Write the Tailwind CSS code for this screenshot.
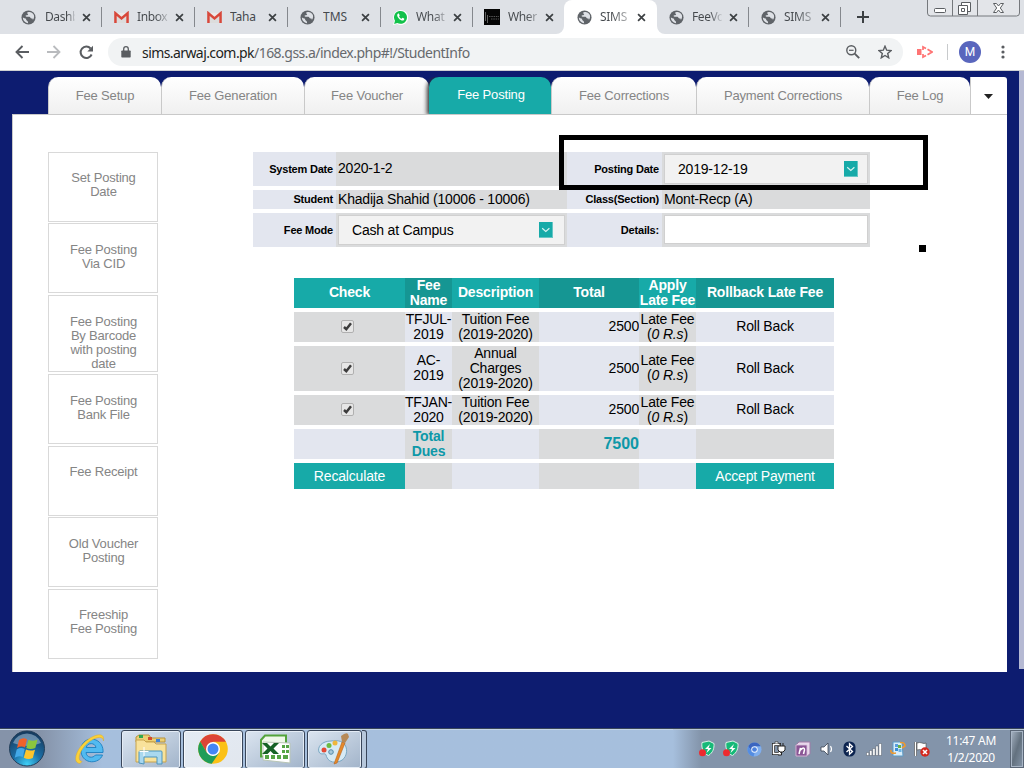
<!DOCTYPE html>
<html lang="en">
<head>
<meta charset="utf-8">
<title>SIMS</title>
<script src="https://cdn.jsdelivr.net/npm/@tailwindcss/browser@4"></script>
</head>
<body class="w-[1024px] h-[768px] overflow-hidden bg-[#0d1c70] flex flex-col relative font-['Liberation_Sans',sans-serif]">
<svg class="hidden">
  <symbol id="globe" viewBox="0 0 16 16"><circle cx="8" cy="8" r="7.500" fill="#5f6368"/><path d="M8.300 2.200c-2 .2-2.300 1.300-1 2 1 .5-.3 1.400-1.600 1.400-1.200 0-1 1.400.4 1.700h2.700c1.300.2 1.200 1.700 2.500 1.800 1.200 0 1.700.6 1.100 1.700 2.400-2.900 2-6.400-.8-8-1.100-.6-2.200-.7-3.300-.6zM2 8c0 3.300 2.400 5.700 5.600 6-.3-1 .1-2-.8-2.400-1-.4-1.500-1.100-1.400-2.200C4.200 9.200 3 8.700 2 8z" fill="#dee1e6"/></symbol>
  <symbol id="gmail" viewBox="0 0 16 14"><path d="M1 2h14v11H1z" fill="#eceaea"/><path d="M3 13V5l5 4 5-4v8z" fill="#dcdcdc"/><path d="M1.500 13V2.500L8 8l6.500-5.500V13" fill="none" stroke="#d8483b" stroke-width="2.700"/></symbol>
  <symbol id="close" viewBox="0 0 10 10"><path d="M1.200 1.200l7.600 7.600M8.800 1.200L1.200 8.800" stroke="#3c4043" stroke-width="1.900" fill="none"/></symbol>
  <symbol id="drop" viewBox="0 0 14 16"><path d="M0 0h14v16H0z" fill="#66c6c5"/><path d="M0 0h13v15H0z" fill="#17aaa8"/><path d="M3.200 6.300l3.600 3.200 3.600-3.200" stroke="#d9f2f1" stroke-width="1.200" fill="none"/></symbol>
  <symbol id="check" viewBox="0 0 13 13"><rect x=".5" y=".5" width="12" height="12" rx="1.500" fill="#e6e6e6" stroke="#b0b0b0"/><path d="M3 7l2.300 2.200 4.700-6" fill="none" stroke="#3c3c3c" stroke-width="2.500"/></symbol>
  <symbol id="shield" viewBox="0 0 18 18"><path d="M4 2.500L11 1l5 2.500c.3 5-1 9-5.500 12C6 14 3 9 4 2.500z" fill="#16b978" stroke="#d8f2e6"/><path d="M12 4L7 9h3l-1.500 4L13.500 8h-3z" fill="#fff"/><circle cx="4.500" cy="12.800" r="3.500" fill="#ee2a2f"/></symbol>
</svg>

<!-- browser tab strip -->
<div class="h-[34px] shrink-0 bg-[#dee1e6] flex pl-[10px] font-['Noto_Sans',sans-serif] text-[12px] text-[#45494d] leading-[34px]">
  <div class="w-[93px] flex items-center border-r border-transparent relative"><svg class="w-[15px] h-[15px] ml-[11px] shrink-0"><use href="#globe"/></svg><span class="ml-[9px] w-[30px] overflow-hidden whitespace-nowrap tracking-[-0.4px] bg-linear-to-r from-[#45494d] from-75% to-[#45494d]/10 bg-clip-text text-transparent">Dashb</span><svg class="w-[9px] h-[9px] ml-[7px] shrink-0"><use href="#close"/></svg><i class="absolute right-0 top-[7px] w-px h-5 bg-[#85888d]"></i></div>
  <div class="w-[93px] flex items-center border-r border-transparent relative"><svg class="w-[15px] h-[13px] ml-[11px] shrink-0"><use href="#gmail"/></svg><span class="ml-[8px] w-[31px] overflow-hidden whitespace-nowrap tracking-[-0.4px] bg-linear-to-r from-[#45494d] from-60% to-[#45494d]/20 bg-clip-text text-transparent">Inbox</span><svg class="w-[9px] h-[9px] ml-[7px] shrink-0"><use href="#close"/></svg><i class="absolute right-0 top-[7px] w-px h-5 bg-[#85888d]"></i></div>
  <div class="w-[93px] flex items-center border-r border-transparent relative"><svg class="w-[15px] h-[13px] ml-[11px] shrink-0"><use href="#gmail"/></svg><span class="ml-[8px] w-[31px] overflow-hidden whitespace-nowrap tracking-[-0.2px]">Taha</span><svg class="w-[9px] h-[9px] ml-[7px] shrink-0"><use href="#close"/></svg><i class="absolute right-0 top-[7px] w-px h-5 bg-[#85888d]"></i></div>
  <div class="w-[93px] flex items-center border-r border-transparent relative"><svg class="w-[15px] h-[15px] ml-[11px] shrink-0"><use href="#globe"/></svg><span class="ml-[8px] w-[31px] overflow-hidden whitespace-nowrap">TMS</span><svg class="w-[9px] h-[9px] ml-[7px] shrink-0"><use href="#close"/></svg><i class="absolute right-0 top-[7px] w-px h-5 bg-[#85888d]"></i></div>
  <div class="w-[92px] flex items-center border-r border-transparent relative"><svg class="w-[15px] h-[15px] ml-[11px] shrink-0" viewBox="0 0 16 16"><path d="M0 16l1.200-4.200A8 8 0 1 1 4.300 15z" fill="#fff"/><path d="M1.200 14.800l.9-3.300a6.900 6.900 0 1 1 2.500 2.400z" fill="#12c14a"/><path d="M5.200 4c-1.300 1-.9 3 1 5 2 2.100 4.300 3 5.400 1.700.8-.9.500-1.400-.2-1.800l-1-.5c-.6-.2-.9 1-1.500.8C7.500 8.700 6.700 7.700 6.500 7c0-.4.7-.7.6-1.200L6.500 4.300C6.200 3.700 5.700 3.700 5.200 4z" fill="#fff"/></svg><span class="ml-[8px] w-[30px] overflow-hidden whitespace-nowrap tracking-[-0.3px] bg-linear-to-r from-[#45494d] from-60% to-[#45494d]/20 bg-clip-text text-transparent">What</span><svg class="w-[9px] h-[9px] ml-[7px] shrink-0"><use href="#close"/></svg><i class="absolute right-0 top-[7px] w-px h-5 bg-[#85888d]"></i></div>
  <div class="w-[90px] flex items-center relative"><svg class="w-[16px] h-[16px] ml-[10px] shrink-0" viewBox="0 0 16 16"><path d="M0 0h16v16H0z" fill="#050505"/><path d="M1.500 3v9M3.500 6v8" stroke="#777" stroke-width=".8"/><path d="M5 7.500h10M7 10h8" stroke="#555" stroke-dasharray="1.500 .8"/></svg><span class="ml-[8px] w-[30px] overflow-hidden whitespace-nowrap tracking-[-0.4px] bg-linear-to-r from-[#45494d] from-60% to-[#45494d]/30 bg-clip-text text-transparent">Wher</span><svg class="w-[9px] h-[9px] ml-[7px] shrink-0"><use href="#close"/></svg></div>
  <div class="w-[93px] flex items-center bg-white rounded-t-[8px] relative"><svg class="absolute -left-2 bottom-0 w-2 h-2" viewBox="0 0 8 8"><path d="M8 0v8H0a8 8 0 0 0 8-8z" fill="#fff"/></svg><svg class="absolute -right-2 bottom-0 w-2 h-2" viewBox="0 0 8 8"><path d="M0 0v8h8a8 8 0 0 1-8-8z" fill="#fff"/></svg><svg class="w-[15px] h-[15px] ml-[13px] shrink-0"><use href="#globe"/></svg><span class="ml-[8px] w-[30px] overflow-hidden whitespace-nowrap tracking-[-0.3px] bg-linear-to-r from-[#45494d] from-40% to-[#45494d]/30 bg-clip-text text-transparent">SIMS</span><svg class="w-[9px] h-[9px] ml-[7px] shrink-0"><use href="#close"/></svg></div>
  <div class="w-[92px] flex items-center relative"><svg class="w-[15px] h-[15px] ml-[12px] shrink-0"><use href="#globe"/></svg><span class="ml-[8px] w-[30px] overflow-hidden whitespace-nowrap tracking-[-0.4px] bg-linear-to-r from-[#45494d] from-60% to-[#45494d]/10 bg-clip-text text-transparent">FeeVo</span><svg class="w-[9px] h-[9px] ml-[7px] shrink-0"><use href="#close"/></svg><i class="absolute right-0 top-[7px] w-px h-5 bg-[#85888d]"></i></div>
  <div class="w-[92px] flex items-center relative"><svg class="w-[15px] h-[15px] ml-[12px] shrink-0"><use href="#globe"/></svg><span class="ml-[8px] w-[30px] overflow-hidden whitespace-nowrap tracking-[-0.3px] bg-linear-to-r from-[#45494d] from-40% to-[#45494d]/30 bg-clip-text text-transparent">SIMS</span><svg class="w-[9px] h-[9px] ml-[7px] shrink-0"><use href="#close"/></svg><i class="absolute right-0 top-[7px] w-px h-5 bg-[#85888d]"></i></div>
  <svg class="w-[12px] h-[12px] mt-[11px] ml-[16px]" viewBox="0 0 12 12"><path d="M6 0v12M0 6h12" stroke="#3c4043" stroke-width="2"/></svg>
  <svg class="w-[94px] h-[18px] ml-auto mr-[4px]" viewBox="0 0 94 18"><path d="M1.500 0v13q0 3 3 3h86q3 0 3-3V0M26.500 0v16M51.500 0v16" fill="#e3e5e9" stroke="#75787c"/><rect x="8.500" y="8.500" width="11" height="4" rx="1" fill="#fff" stroke="#5b5e62"/><path d="M35.500 2.500h9v9h-9z" fill="#fff" stroke="#5b5e62"/><path d="M32.500 5.500h9v9h-9z" fill="#fff" stroke="#5b5e62"/><path d="M35.500 8.500h3v3h-3z" fill="#fff" stroke="#5b5e62"/><path d="M67.500 3.500h3l2 2.500 2-2.500h3l-3.200 4.500 3.200 4.500h-3l-2-2.500-2 2.500h-3l3.200-4.500z" fill="#fff" stroke="#5b5e62"/></svg>
</div>

<!-- toolbar -->
<div class="h-[37px] shrink-0 bg-white border-b border-[#cfd0d2] flex items-center">
  <svg class="w-[14px] h-[14px] ml-[15px]" viewBox="0 0 14 14"><path d="M14 7H1.500M7.500 1L1.500 7l6 6" fill="none" stroke="#5a5d61" stroke-width="1.900"/></svg>
  <svg class="w-[14px] h-[14px] ml-[18px]" viewBox="0 0 14 14"><path d="M0 7h12.500M6.500 1l6 6-6 6" fill="none" stroke="#b9bbbe" stroke-width="1.800"/></svg>
  <svg class="w-[15px] h-[15px] ml-[18px]" viewBox="0 0 15 15"><path d="M12.600 9.500A5.700 5.700 0 1 1 11.600 3.500" fill="none" stroke="#5a5d61" stroke-width="2"/><path d="M14 .8v5.700H8.300z" fill="#5a5d61"/></svg>
  <div class="w-[795px] h-[28px] ml-[14px] rounded-full bg-[#f1f3f4] flex items-center font-['Noto_Sans',sans-serif] text-[14px] text-[#66696d]">
    <svg class="w-[10px] h-[12px] ml-[13px]" viewBox="0 0 10 12"><path d="M1 4.500h8q.7 0 .7.700v5.600q0 .7-.7.700H1q-.7 0-.7-.7V5.200q0-.7.7-.7z" fill="#5a5d61"/><path d="M2.700 5V3a2.300 2.300 0 0 1 4.600 0v2" fill="none" stroke="#5a5d61" stroke-width="1.300"/></svg>
    <span class="ml-[11px] tracking-[-0.53px] whitespace-nowrap"><span class="text-[#1c1e21] tracking-[-0.58px]">sims.arwaj.com.pk</span>/168.gss.a/index.php#!/StudentInfo</span>
    <svg class="w-[14px] h-[14px] ml-auto" viewBox="0 0 14 14"><circle cx="5.300" cy="5.300" r="4.500" fill="none" stroke="#5a5d61" stroke-width="1.400"/><path d="M8.700 8.700l4.500 4.500" stroke="#5a5d61" stroke-width="1.900"/><path d="M3 5.300h4.600" stroke="#5a5d61" stroke-width="1.200"/></svg>
    <svg class="w-[14px] h-[14px] ml-[18px] mr-[11px]" viewBox="0 0 14 14"><path d="M7 1.200l1.700 4 4.300.4-3.300 2.900 1 4.300L7 10.500l-3.700 2.300 1-4.300L1 5.600l4.300-.4z" fill="none" stroke="#5a5d61" stroke-width="1.400"/></svg>
  </div>
  <svg class="w-[16px] h-[14px] ml-[14px]" viewBox="0 0 16 14"><path d="M0 4h4.500v6H0z" fill="#ff7474"/><path d="M6 5V2l3 1.500M10.500 4.300L15 7l-4.500 2.700M9 10.500L6 12V9" fill="none" stroke="#ff7474" stroke-width="1.700"/></svg>
  <div class="w-px h-4 bg-[#c8cacc] ml-[14px]"></div>
  <div class="size-[22px] rounded-full bg-[#5966bd] ml-[11px] text-white text-[12px] font-['Roboto'] leading-[22px] text-center">M</div>
  <svg class="w-[4px] h-[14px] ml-[20px]" viewBox="0 0 4 14"><g fill="#5a5d61"><circle cx="2" cy="2" r="1.600"/><circle cx="2" cy="7" r="1.600"/><circle cx="2" cy="12" r="1.600"/></g></svg>
</div>

<!-- page -->
<div class="h-[657px] shrink-0 flex">
 <div class="w-[995px] ml-[12px]">
  <div class="h-[43px] pt-[6px] pl-[36px] flex text-[13px] tracking-[-0.17px] text-[#858585] text-center leading-[37px]">
    <div class="w-[113px] rounded-t-[10px] bg-linear-to-b from-white to-[#f0f0f0] border-l border-[#c9c9c9]">Fee Setup</div>
    <div class="w-[143px] rounded-t-[10px] bg-linear-to-b from-white to-[#f0f0f0] border-l border-[#c9c9c9]">Fee Generation</div>
    <div class="w-[125px] rounded-t-[10px] bg-linear-to-b from-white to-[#f0f0f0] border-l border-[#c9c9c9]">Fee Voucher</div>
    <div class="w-[122px] pl-[2px] z-1 rounded-t-[10px] bg-[#17aaa8] text-white leading-[35px] shadow-[-2px_1px_4px_#333] [clip-path:inset(0_0_0_-8px)]">Fee Posting</div>
    <div class="w-[145px] rounded-t-[10px] bg-linear-to-b from-white to-[#f0f0f0] border-l border-[#c9c9c9]">Fee Corrections</div>
    <div class="w-[173px] rounded-t-[10px] bg-linear-to-b from-white to-[#f0f0f0] border-l border-[#c9c9c9]">Payment Corrections</div>
    <div class="w-[101px] rounded-t-[10px] bg-linear-to-b from-white to-[#f0f0f0] border-l border-[#c9c9c9]">Fee Log</div>
    <div class="w-[37px] rounded-tr-[3px] bg-white border-l border-[#c9c9c9] flex items-center justify-center"><svg class="w-[9px] h-[5px] mt-[2px] mr-[2px]" viewBox="0 0 9 5"><path d="M0 0h9L4.500 5z" fill="#222"/></svg></div>
  </div>
  <div class="h-[558px] bg-white border-l border-t border-[#c9c9c9] flex">
    <div class="ml-[35px] pt-[37px] w-[110px] text-[13px] tracking-[-0.2px] leading-[14px] text-[#858585] text-center">
      <div class="h-[70px] border border-[#d9d9d9] pt-[18px] pl-px">Set Posting<br>Date</div>
      <div class="h-[70px] mt-px border border-[#d9d9d9] pt-[19px] pl-px">Fee Posting<br>Via CID</div>
      <div class="h-[77px] mt-[2px] border border-[#d9d9d9] pt-[19px] pl-px">Fee Posting<br>By Barcode<br>with posting<br>date</div>
      <div class="h-[70px] mt-[2px] border border-[#d9d9d9] pt-[19px] pl-px">Fee Posting<br>Bank File</div>
      <div class="h-[70px] mt-[2px] border border-[#d9d9d9] pt-[18px] pl-px">Fee Receipt</div>
      <div class="h-[70px] mt-px border border-[#d9d9d9] pt-[19px] pl-px">Old Voucher<br>Posting</div>
      <div class="h-[70px] mt-[2px] border border-[#d9d9d9] pt-[18px] pl-px">Freeship<br>Fee Posting</div>
    </div>
    <div class="ml-[95px] pt-[37px]">
      <div class="grid grid-cols-[83px_231px_95px_208px] grid-rows-[34px_19px_34px] gap-y-[4px] text-[14px] tracking-[-0.2px] text-black">
        <div class="bg-[#e3e6ef] flex items-center justify-end pr-[3px] font-bold text-[11px]">System Date</div>
        <div class="bg-[#dadbdc] flex items-center pl-[2px] pb-[2px]">2020-1-2</div>
        <div class="bg-[#e3e6ef] flex items-center justify-end pr-[3px] font-bold text-[11px]">Posting Date</div>
        <div class="bg-[#dadbdc] p-[2px]"><div class="h-[30px] w-[204px] bg-[#f2f2f2] border border-[#d0d0d0] flex items-center pl-[13px] pr-[9px] justify-between">2019-12-19<svg class="w-[14px] h-[16px]"><use href="#drop"/></svg></div></div>
        <div class="bg-[#e3e6ef] flex items-center justify-end pr-[3px] font-bold text-[11px]">Student</div>
        <div class="bg-[#dadbdc] flex items-center pl-[2px]">Khadija Shahid (10006 - 10006)</div>
        <div class="bg-[#e3e6ef] flex items-center justify-end pr-[3px] font-bold text-[11px]">Class(Section)</div>
        <div class="bg-[#dadbdc] flex items-center pl-[2px]">Mont-Recp (A)</div>
        <div class="bg-[#e3e6ef] flex items-center justify-end pr-[3px] font-bold text-[11px]">Fee Mode</div>
        <div class="bg-[#dadbdc] p-[2px]"><div class="h-[30px] w-[227px] bg-[#f2f2f2] border border-[#d0d0d0] flex items-center pl-[13px] pr-[11px] justify-between">Cash at Campus<svg class="w-[14px] h-[16px]"><use href="#drop"/></svg></div></div>
        <div class="bg-[#e3e6ef] flex items-center justify-end pr-[3px] font-bold text-[11px]">Details:</div>
        <div class="bg-[#dadbdc] p-[2px]"><div class="h-[29px] w-[204px] bg-white border border-[#d0d0d0]"></div></div>
      </div>
      <div class="ml-[41px] mt-[31px] w-[540px] grid grid-cols-[111px_47px_87px_100px_57px_138px] grid-rows-[30px_30px_45px_30px_30px_26px] gap-y-[4px] text-[14px] leading-[15px] tracking-[-0.17px] text-black text-center *:flex *:items-center *:justify-center *:min-w-0">
        <div class="bg-[#17aaa8] text-white font-bold pb-[2px]">Check</div>
        <div class="bg-[#159693] text-white font-bold">Fee<br>Name</div>
        <div class="bg-[#17aaa8] text-white font-bold pb-[2px]">Description</div>
        <div class="bg-[#159693] text-white font-bold pb-[2px]">Total</div>
        <div class="bg-[#17aaa8] text-white font-bold whitespace-nowrap">Apply<br>Late Fee</div>
        <div class="bg-[#159693] text-white font-bold pb-[2px]">Rollback Late Fee</div>

        <div class="bg-[#dadbdc] pr-[5px] pb-px"><svg class="size-[13px]"><use href="#check"/></svg></div>
        <div class="bg-[#e3e6ef] whitespace-nowrap">TFJUL-<br>2019</div>
        <div class="bg-[#dadbdc] whitespace-nowrap">Tuition Fee<br>(2019-2020)</div>
        <div class="bg-[#e3e6ef] justify-end! pb-[2px]">2500</div>
        <div class="bg-[#dadbdc] whitespace-nowrap"><p>Late Fee<br>(<i>0 R.s</i>)</p></div>
        <div class="bg-[#e3e6ef] pb-[2px]">Roll Back</div>

        <div class="bg-[#dadbdc] pr-[5px] pb-px"><svg class="size-[13px]"><use href="#check"/></svg></div>
        <div class="bg-[#e3e6ef] whitespace-nowrap pb-[2px]">AC-<br>2019</div>
        <div class="bg-[#dadbdc] whitespace-nowrap">Annual<br>Charges<br>(2019-2020)</div>
        <div class="bg-[#e3e6ef] justify-end!">2500</div>
        <div class="bg-[#dadbdc] whitespace-nowrap pb-[2px]"><p>Late Fee<br>(<i>0 R.s</i>)</p></div>
        <div class="bg-[#e3e6ef]">Roll Back</div>

        <div class="bg-[#dadbdc] pr-[5px] pb-px"><svg class="size-[13px]"><use href="#check"/></svg></div>
        <div class="bg-[#e3e6ef] whitespace-nowrap">TFJAN-<br>2020</div>
        <div class="bg-[#dadbdc] whitespace-nowrap">Tuition Fee<br>(2019-2020)</div>
        <div class="bg-[#e3e6ef] justify-end! pb-[2px]">2500</div>
        <div class="bg-[#dadbdc] whitespace-nowrap"><p>Late Fee<br>(<i>0 R.s</i>)</p></div>
        <div class="bg-[#e3e6ef] pb-[2px]">Roll Back</div>

        <div class="bg-[#e3e6ef]"></div>
        <div class="bg-[#dadbdc] text-[#0d98a8] font-bold">Total<br>Dues</div>
        <div class="bg-[#e3e6ef]"></div>
        <div class="bg-[#dadbdc] text-[#0d98a8] font-bold text-[16px] tracking-normal justify-end! pb-[2px]">7500</div>
        <div class="bg-[#e3e6ef]"></div>
        <div class="bg-[#dadbdc]"></div>

        <div class="bg-[#17aaa8] text-white">Recalculate</div>
        <div class="bg-[#dadbdc]"></div>
        <div class="bg-[#e3e6ef]"></div>
        <div class="bg-[#dadbdc]"></div>
        <div class="bg-[#e3e6ef]"></div>
        <div class="bg-[#17aaa8] text-white">Accept Payment</div>
      </div>
    </div>
  </div>
 </div>
 <div class="w-[5px] h-[598px] bg-[#b5b9d3] ml-auto"></div>
</div>

<!-- marker strokes over the page -->
<div class="absolute left-[559px] top-[135px] w-[369px] h-[55px] border-5 border-black"></div>
<div class="absolute left-[919px] top-[245px] w-[7px] h-[7px] bg-black"></div>

<!-- taskbar -->
<div class="h-[40px] shrink-0 border-t border-[#39465a] bg-linear-to-r from-[#8593a9] from-4% via-[#a6bfdd] via-10% to-[#a6bfdd] flex">
 <div class="flex-1 border-t border-[#c4d6e8] flex items-center">
  <svg class="w-[38px] h-[38px] ml-[8px]" viewBox="0 0 38 38"><defs><radialGradient id="orb" cx=".5" cy=".95" r=".9"><stop offset="0" stop-color="#3fd0f7"/><stop offset=".45" stop-color="#1c6fa6"/><stop offset="1" stop-color="#163c60"/></radialGradient></defs><circle cx="19" cy="18.500" r="17.500" fill="url(#orb)" stroke="#243f5a"/><path d="M5 13a15 15 0 0 1 28 0q-14 6-28 0z" fill="#a9c3d8" opacity=".55"/><path d="M11 10q4-3 8-.8l-2 8.300q-4-2-8 .5z" fill="#f0622b"/><path d="M20.500 9.800q4 2 9-.3l-2.200 8.500q-5 2-9 0z" fill="#8cc63e"/><path d="M8.700 19.500q4-2.500 8-.5l-2 8q-4-1.800-8 .8z" fill="#43a9e8"/><path d="M18 19.500q4 2 9 .2l-2.200 8.300q-4.500 2-9-.3z" fill="#fdc52d"/></svg>
  <svg class="w-[32px] h-[32px] ml-[28px]" viewBox="0 0 32 32"><path d="M29 19.500H12c.5 5.500 7 6 9.500 2.500H28.500C25.500 31 9 32 7 19 6 8 15 4 22 7c5 2.300 7.500 7 7 12.500zM12.200 14.500H22c-.8-5-8.600-5.300-9.800 0z" fill="#52baf0" stroke="#1c7fc0" stroke-width=".9"/><path d="M6 30.500C-3 30 3 14 14 6.500 21 1.500 31-1.500 29.500 8c-.5-5-6-4.500-12.500-.5C8 13 1 27 8 28.500z" fill="#fbd13a" stroke="#d9a31a" stroke-width=".4"/></svg>
  <div class="w-[60px] h-[39px] ml-[15px] border border-[#39465a] rounded-[3px] bg-linear-to-br from-[#dbe5f0] to-[#a2b4ca] shadow-[inset_0_0_0_1px_#e4ecf5] flex items-center justify-center"><svg class="w-[34px] h-[32px]" viewBox="0 0 34 32"><path d="M2 4l3-2h10l2 3h14v4H2z" fill="#eccf73" stroke="#b7933c"/><path d="M5 2h4v3H5z" fill="#2fa84f"/><path d="M14 4h4v3h-4z" fill="#d34a2d"/><path d="M22 6h4v3h-4z" fill="#3b83d8"/><path d="M2 7h8l2 2h8l2 2h10v18H2z" fill="#f8e29b" stroke="#c7a34c"/><path d="M5 30V19q0-1 1-1h21q1 0 1 1v12h-5v-7H10v7z" fill="#a9d8ef" stroke="#4c95bd"/><path d="M10 14v9M5.500 18.500h9" stroke="#fff"/></svg></div>
  <div class="w-[60px] h-[39px] ml-[2px] border border-[#39465a] rounded-[3px] bg-linear-to-br from-[#e3ebf4] to-[#e2e7ee] shadow-[inset_0_0_0_1px_#f6f9fc] flex items-center justify-center"><svg class="w-[30px] h-[30px] mr-px" viewBox="0 0 30 30"><circle cx="15" cy="15" r="14.800" fill="#fbc116"/><path d="M2.200 7.500A14.800 14.800 0 0 1 27.900 7.800H15L8.700 18.600z" fill="#dc4437"/><path d="M2.200 7.500L8.700 18.600 15 22.300l-1.300 7.500A14.800 14.800 0 0 1 2.200 7.500z" fill="#1f9d58"/><path d="M8.700 18.600L15 22.200l6.200-3.400-7.500 11z" fill="#1f9d58"/><circle cx="15" cy="15" r="7" fill="#fff"/><circle cx="15" cy="15" r="5.500" fill="#4486f4"/></svg></div>
  <div class="w-[60px] h-[39px] ml-[2px] border border-[#39465a] rounded-[3px] bg-linear-to-br from-[#dbe5f0] to-[#a2b4ca] shadow-[inset_0_0_0_1px_#e4ecf5] flex items-center justify-center"><svg class="w-[32px] h-[31px]" viewBox="0 0 32 31"><path d="M6 1.500h21v21H2V6z" fill="#eff8e9" stroke="#53a33b" stroke-width="2"/><path d="M4 8l27 1v20L4 26z" fill="#fff" stroke="#b9c6b5"/><g fill="#55a444"><path d="M23 11h3v3h-3zM27 11h3v3h-3zM23 16h3v3h-3zM27 16h3v3h-3zM6 21h4v4H6zM12 21h4v4h-4zM18 21h4v4h-4zM24 21h5v4h-5z"/></g><path d="M3 9h5l3.500 3.500L15 9h5l-5.500 5.500L20 20h-5.500l-3-3-3 3H3l5.500-5.500z" fill="#176326"/></svg></div>
  <div class="w-[55px] h-[39px] ml-[2px] border border-[#39465a] rounded-[3px] bg-linear-to-br from-[#dbe5f0] to-[#a2b4ca] shadow-[inset_0_0_0_1px_#e4ecf5] flex items-center justify-center"><svg class="w-[33px] h-[32px] ml-[-2px]" viewBox="0 0 33 32"><path d="M14 8C5 8 0 14 2 19c2 4 6 0 7 3 1 4 4 8 11 7 8-1 11-9 9-15S21 7 14 8z" fill="#d7eaf5" stroke="#7aa7c2"/><circle cx="7" cy="17" r="2.500" fill="#e34a35"/><circle cx="12" cy="12.500" r="2.500" fill="#6bbb42"/><circle cx="18" cy="10" r="2.500" fill="#efb63c"/><circle cx="14" cy="19" r="2.300" fill="#a7c9dd" stroke="#558baa"/><path d="M17 31L25 9l3 1-8 20z" fill="#e6892b" stroke="#b5631b" stroke-width=".6"/><path d="M25 9l-1-6q5-4 7-2l1 3-4 6z" fill="#b78956"/></svg></div>
  <div class="w-[5px] h-[39px] border-y border-r border-[#39465a] rounded-r-[3px] bg-[#b7c8dc]"></div>
 </div>
 <div class="w-[351px] border-t border-[#b9c8d8] bg-linear-to-r from-[#a6bfdd] to-[#8394aa] to-8% flex items-center">
  <svg class="w-[18px] h-[18px] ml-[25px]"><use href="#shield"/></svg>
  <svg class="w-[18px] h-[18px] ml-[6px]"><use href="#shield"/></svg>
  <svg class="w-[15px] h-[15px] ml-[7px]" viewBox="0 0 16 16"><circle cx="8" cy="8" r="7.500" fill="#7faeee"/><path d="M1.300 4.500a7.500 7.500 0 0 1 13.300 0H8L5 10z" fill="#3b65bf"/><path d="M1.300 4.500L5 10l3 2-1 3.400A7.500 7.500 0 0 1 1.300 4.500z" fill="#548de2"/><circle cx="8" cy="8" r="3.500" fill="#e8f1fc"/><circle cx="8" cy="8" r="2.500" fill="#4d81dc"/></svg>
  <svg class="w-[15px] h-[16px] ml-[9px]" viewBox="0 0 15 16"><path d="M2.500 3.500h6v9h-6z" fill="#8394aa" stroke="#222" stroke-width="3"/><path d="M4 .8h3v2H4z" fill="#fff" stroke="#222" stroke-width=".6"/><path d="M2.500 3.500h6v9h-6z" fill="none" stroke="#fff" stroke-width="1.500"/><path d="M7 5h7v4l-2 2H9L7 9zM9 2v3M12 2v3M10.500 11v3H7" fill="#fff" stroke="#222" stroke-width="1"/></svg>
  <svg class="w-[16px] h-[16px] ml-[9px]" viewBox="0 0 16 16"><path d="M4 1h11v12l-3 2H1V4z" fill="#e8d8eb" stroke="#a07ba8"/><path d="M1 4h11v11H1z" fill="#8a5595" stroke="#d9c4dd" stroke-width=".8"/><path d="M4 13l1.500-6v2q4-4 4 0l-1 4" fill="none" stroke="#fff" stroke-width="1.500"/></svg>
  <svg class="w-[14px] h-[14px] ml-[9px]" viewBox="0 0 14 14"><path d="M1 5h3l4-4v12L4 9H1z" fill="#fff" stroke="#3a4350" stroke-width=".8"/><path d="M10.500 4q2 3 0 6" fill="none" stroke="#fff" stroke-width="1.200"/></svg>
  <svg class="w-[13px] h-[16px] ml-[9px]" viewBox="0 0 13 16"><rect x=".5" y=".5" width="12" height="15" rx="5.500" fill="#0c2450"/><path d="M3.500 5l6 5.500-3 2.800V2.700l3 2.800-6 5.500" fill="none" stroke="#fff" stroke-width="1.300"/></svg>
  <svg class="w-[16px] h-[13px] ml-[10px]" viewBox="0 0 16 13"><g fill="#fff" stroke="#39424e" stroke-width=".4"><path d="M.5 9.500h2.300v3H.5zM3.600 7.500h2.300v5H3.600zM6.700 5.500H9v7H6.700zM9.800 3h2.300v9.500H9.800zM12.900.5h2.600v12h-2.600z"/></g></svg>
  <svg class="w-[16px] h-[16px] ml-[8px]" viewBox="0 0 16 16"><path d="M3 1h9l1 14H3z" fill="#d9edf9" stroke="#5b9bc7"/><path d="M5 3h3v3H5z" fill="#5a9fe0"/><path d="M8 4h3v3H8z" fill="#64b246"/><path d="M5 7h3v3H5z" fill="#3b8fd6"/><path d="M8.500 8h3v3h-3z" fill="#6db4e6"/><path d="M1 9q-1 4 5 3M10 1.500q5-.5 5 3.500l-3 2" fill="none" stroke="#ee9a2f" stroke-width="1.600"/></svg>
  <svg class="w-[16px] h-[16px] ml-[8px]" viewBox="0 0 16 16"><path d="M1.500 1v14" stroke="#333" stroke-width="2.600"/><path d="M1.500 1v14" stroke="#fff" stroke-width="1.600"/><path d="M3 2q3-1 5 0t4 0v7q-2 1-4 0t-5 0z" fill="#fff" stroke="#444" stroke-width=".6"/><circle cx="11" cy="11" r="4.700" fill="#d3281e"/><path d="M9 9l4 4M13 9l-4 4" stroke="#fff" stroke-width="1.600"/></svg>
  <div class="w-[66px] ml-[8px] text-white text-center font-['Noto_Sans',sans-serif] text-[12px] leading-[17px] tracking-[-0.3px] whitespace-nowrap">11:47 AM<br>1/2/2020</div>
  <div class="w-[14px] h-[38px] ml-auto border border-[#5a6676] shadow-[inset_0_0_0_1px_#a8b5c5] bg-linear-to-br from-[#a7b4c4] via-[#63717f] via-50% to-[#8595a8]"></div>
 </div>
</div>
</body>
</html>
